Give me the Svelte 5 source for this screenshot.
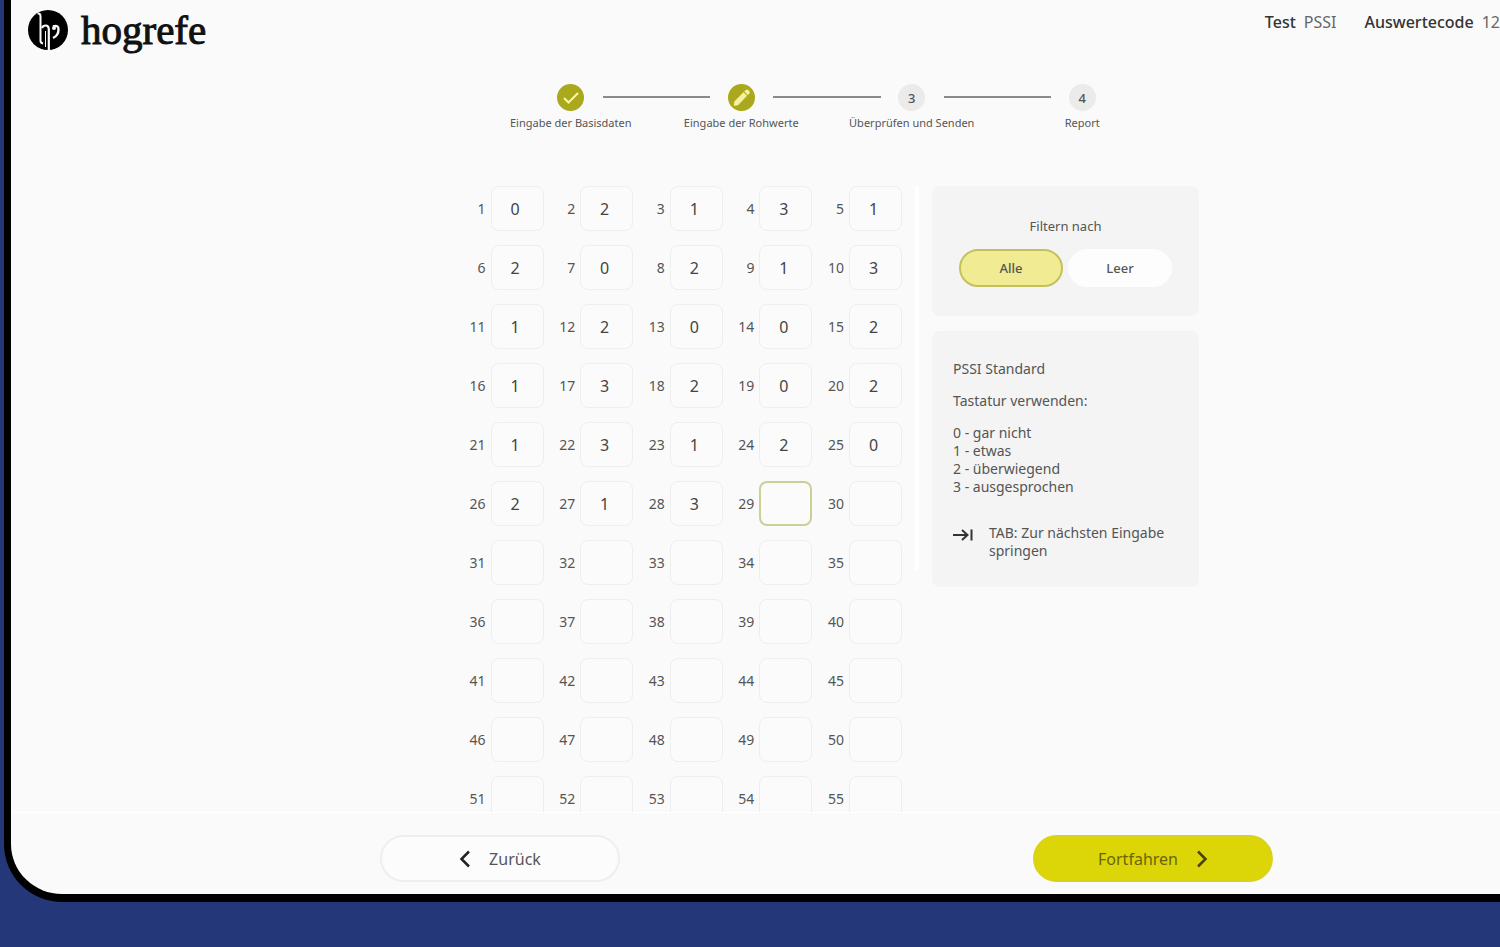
<script lang="ts">
  type Step = { label: string; state: 'done' | 'active' | 'open' }

  const steps: Step[] = [
    { label: 'Eingabe der Basisdaten', state: 'done' },
    { label: 'Eingabe der Rohwerte', state: 'active' },
    { label: 'Überprüfen und Senden', state: 'open' },
    { label: 'Report', state: 'open' },
  ]

  const legend = ['gar nicht', 'etwas', 'überwiegend', 'ausgesprochen']

  const entered = '0213120213120021320213120213'
  const current = 29

  let filter = $state<'all' | 'empty'>('all')
  let items = $state(
    Array.from({ length: 55 }, (_, i) => ({ nr: i + 1, value: entered[i] ?? '' })),
  )

  const visible = $derived(filter === 'all' ? items : items.filter((item) => item.value === ''))
</script>

<div class="device">
  <header class="header">
    <a class="logo" href="#start">
      <svg viewBox="0 0 42 42" width="42" height="42" aria-hidden="true">
        <circle cx="21" cy="21" r="20" fill="#000" />
        <g fill="none" stroke="#fafafa">
          <path d="M10.500 4.500 Q13.500 4 13.500 7.500 V32 Q13.500 34 16 34.500" stroke-width="2" />
          <path d="M15 19 Q16 16.500 18.500 16.500 Q21.800 16.500 21.800 20.500 V41" stroke-width="2.200" />
          <path d="M18.500 22 V38" stroke-width="1" />
          <path d="M26 17.500 Q31.500 15.500 31.500 20.500 Q31.500 26.500 26 29" stroke-width="2.400" />
        </g>
        <circle cx="27" cy="19" r="2" fill="#fafafa" />
      </svg>
      <span>hogrefe</span>
    </a>
    <dl class="meta">
      <div>
        <dt>Test</dt>
        <dd>PSSI</dd>
      </div>
      <div>
        <dt>Auswertecode</dt>
        <dd>12</dd>
      </div>
    </dl>
  </header>

  <ol class="steps">
    {#each steps as step, i (step.label)}
      <li class={step.state} aria-current={step.state === 'active' ? 'step' : undefined}>
        <span class="dot">
          {#if step.state === 'done'}
            <svg viewBox="0 0 27 27" width="27" height="27" aria-hidden="true">
              <path d="M7 14 L11.500 18.500 L21 9" fill="none" stroke="#faf6b0" stroke-width="2" />
            </svg>
          {:else if step.state === 'active'}
            <svg viewBox="0 0 27 27" width="27" height="27" aria-hidden="true">
              <path
                d="M6 21.500 L6.500 17.500 L15.500 8.500 L18.800 11.800 L10 21 Z M16.500 7.500 L17.600 6.400 Q19.200 5.200 20.700 6.700 Q22.200 8.200 21 9.700 L19.800 10.900 Z"
                fill="#f6f0a4"
                stroke="#f6f0a4"
                stroke-width="0.500"
                stroke-linejoin="round"
              />
            </svg>
          {:else}
            {i + 1}
          {/if}
        </span>
        <span class="label">{step.label}</span>
      </li>
    {/each}
  </ol>

  <main class="content">
    <div class="grid">
      {#each visible as item (item.nr)}
        <div class="item">
          <label for="item-{item.nr}">{item.nr}</label>
          <input
            id="item-{item.nr}"
            class:current={item.nr === current}
            inputmode="numeric"
            maxlength="1"
            autocomplete="off"
            bind:value={item.value}
          />
        </div>
      {/each}
    </div>
    <div class="scrollbar"></div>

    <aside class="side">
      <section class="card filter">
        <h2 id="filter-heading">Filtern nach</h2>
        <div class="options" role="group" aria-labelledby="filter-heading">
          <button type="button" class:selected={filter === 'all'} onclick={() => (filter = 'all')}>
            Alle
          </button>
          <button
            type="button"
            class:selected={filter === 'empty'}
            onclick={() => (filter = 'empty')}
          >
            Leer
          </button>
        </div>
      </section>

      <section class="card help">
        <p>PSSI Standard</p>
        <p>Tastatur verwenden:</p>
        <ul>
          {#each legend as text, i}
            <li>{i} - {text}</li>
          {/each}
        </ul>
        <div class="tab">
          <svg viewBox="0 0 20 20" width="20" height="20" aria-hidden="true">
            <path
              d="M0 11 H14 M9 6 L14.500 11 L9 16 M18.500 5.500 V16.500"
              fill="none"
              stroke="#333"
              stroke-width="2"
            />
          </svg>
          <span>TAB: Zur nächsten Eingabe springen</span>
        </div>
      </section>
    </aside>
  </main>

  <footer class="footer">
    <div class="nav">
      <button type="button" class="back">
        <svg viewBox="0 0 12 18" width="12" height="18" aria-hidden="true">
          <path d="M10 1.500 L2.500 9 L10 16.500" fill="none" stroke="#222" stroke-width="2.500" />
        </svg>
        Zurück
      </button>
      <button type="button" class="next">
        Fortfahren
        <svg viewBox="0 0 12 18" width="12" height="18" aria-hidden="true">
          <path d="M2 1.500 L9.500 9 L2 16.500" fill="none" stroke="#4a4206" stroke-width="2.500" />
        </svg>
      </button>
    </div>
  </footer>
</div>

<style>
  :global(body) {
    background: #243778;
    overflow: hidden;
  }

  :global(#app) {
    height: 100vh;
    overflow: hidden;
  }

  /* the device runs off the top and right edge of the window */
  .device {
    box-sizing: border-box;
    display: flex;
    flex-direction: column;
    width: calc(100% + 145px);
    height: calc(100% - 45px);
    margin-left: 4px;
    border: solid #000;
    border-width: 0 7px 8px;
    border-radius: 0 0 58px 58px;
    overflow: hidden;
    background: #fafafa;
    color: #555;
    font-family: 'Noto Sans', sans-serif;
    font-size: 14px;
    line-height: 18px;
  }

  .header {
    display: flex;
    justify-content: space-between;
    height: 80px;
    padding-left: 16px;
    padding-right: 142px;
  }

  .logo {
    display: flex;
    align-items: center;
    gap: 12px;
    height: 60px;
    color: #111;
    text-decoration: none;
    font-family: 'Liberation Serif', serif;
    font-size: 41px;
    line-height: 48px;
    -webkit-text-stroke: 1px #111;
  }

  .meta {
    display: flex;
    gap: 28px;
    margin: 12px 0 0;
    font-size: 16px;
    line-height: 20px;
  }

  .meta div {
    display: flex;
    gap: 8px;
  }

  dt {
    color: #333;
    font-weight: 500;
  }

  dd {
    margin: 0;
    color: #666;
  }

  .steps {
    display: grid;
    grid-template-columns: repeat(4, 1fr);
    width: 682px;
    margin: 4px auto 0;
    padding: 0;
    list-style: none;
  }

  .steps li {
    position: relative;
    display: flex;
    flex-direction: column;
    align-items: center;
    gap: 4px;
  }

  .steps li:not(:last-child)::after {
    content: '';
    position: absolute;
    top: 12px;
    left: calc(50% + 32px);
    width: calc(100% - 63px);
    height: 2px;
    background: #8a8a8a;
  }

  .dot {
    display: grid;
    place-items: center;
    width: 27px;
    height: 27px;
    border-radius: 50%;
    background: #ebebeb;
    font-size: 13px;
    font-weight: 500;
  }

  .done .dot,
  .active .dot {
    background: #aaa81c;
  }

  .label {
    font-size: 11px;
    line-height: 16px;
    white-space: nowrap;
  }

  .content {
    display: flex;
    flex: 1;
    align-items: flex-start;
    gap: 13px;
    width: 745px;
    min-height: 0;
    margin: 0 auto;
    padding-top: 55px;
    overflow: hidden;
  }

  .grid {
    display: grid;
    grid-template-columns: repeat(5, 1fr);
    row-gap: 14px;
    width: 448px;
  }

  .item {
    display: flex;
    align-items: center;
    justify-content: flex-end;
    gap: 5px;
  }

  .item input {
    box-sizing: border-box;
    width: 53px;
    height: 45px;
    padding: 0 4px 0 0;
    border: 1px solid #eeeeee;
    border-radius: 8px;
    background: #fbfbfb;
    color: #444;
    font: inherit;
    font-size: 16px;
    text-align: center;
  }

  .item input.current {
    border: 2px solid #cdd093;
  }

  .scrollbar {
    width: 4px;
    height: 384px;
    border-radius: 2px;
    background: #fff;
  }

  .side {
    display: flex;
    flex: 1;
    flex-direction: column;
    gap: 15px;
  }

  .card {
    border-radius: 8px;
    background: #f4f4f4;
  }

  .filter {
    padding: 31px 27px 29px;
    text-align: center;
  }

  h2 {
    margin: 0 0 14px;
    font-size: 13px;
    font-weight: 400;
  }

  .options {
    display: flex;
    gap: 5px;
  }

  .options button {
    flex: 1;
    height: 38px;
    padding: 0;
    border: 2px solid #fdfdfd;
    border-radius: 19px;
    background: #fdfdfd;
    color: #555;
    font: inherit;
    font-size: 13px;
    font-weight: 500;
  }

  .options .selected {
    border-color: #c4c05a;
    background: #f1eb94;
  }

  .help {
    padding: 29px 21px 27px;
  }

  .help p,
  .help ul {
    margin: 0 0 14px;
    padding: 0;
    list-style: none;
  }

  .tab {
    display: flex;
    gap: 16px;
    padding-top: 14px;
  }

  .tab svg {
    flex: none;
  }

  .footer {
    padding: 22px 0 12px;
    border-top: 1px solid #fff;
  }

  .nav {
    display: flex;
    justify-content: space-between;
    width: 893px;
    margin: 0 auto;
  }

  .nav button {
    display: flex;
    align-items: center;
    justify-content: center;
    gap: 18px;
    width: 240px;
    height: 47px;
    border: 2px solid #eee;
    border-radius: 24px;
    background: #fcfcfc;
    color: #555;
    font: inherit;
    font-size: 16px;
  }

  .nav .next {
    border-color: #d9d21a;
    background: #dcd608;
    color: #6b640c;
  }
</style>
